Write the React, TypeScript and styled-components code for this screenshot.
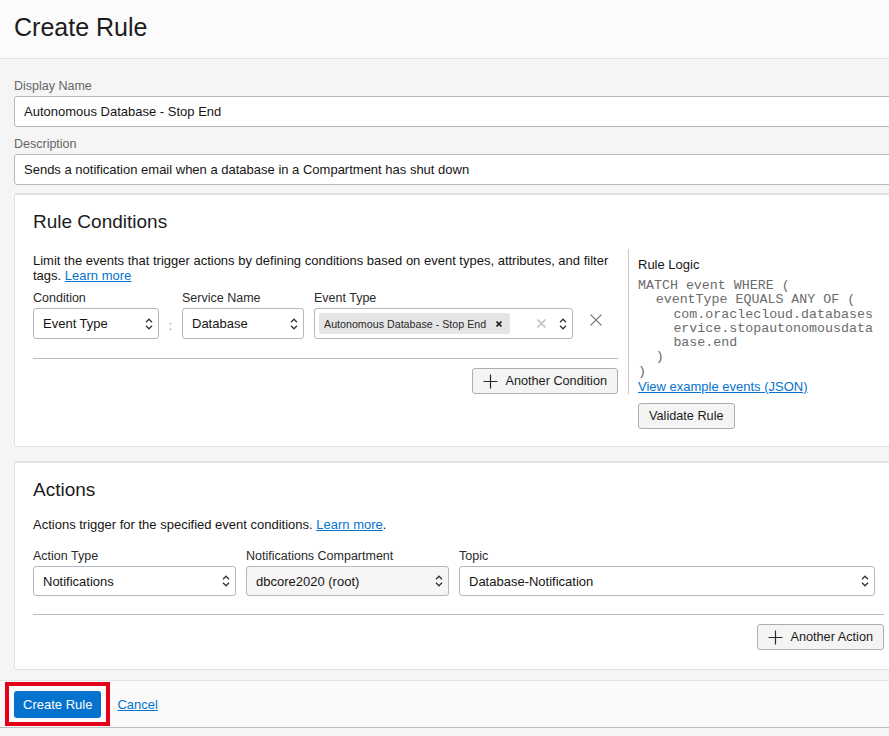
import React from "react";
import styled, { createGlobalStyle } from "styled-components";

const GlobalStyle = createGlobalStyle`
  html, body {
    margin: 0;
    padding: 0;
    overflow: hidden;
    background: #f5f5f5;
  }
  body {
    font-family: "Liberation Sans", Arial, sans-serif;
    color: #161513;
    width: 889px;
    height: 736px;
  }
  *, *::before, *::after { box-sizing: border-box; }
`;

const Page = styled.div`
  width: 931px;
`;

const Header = styled.header`
  height: 59px;
  background: #fbfbfb;
  border-bottom: 1px solid #e4e4e4;
  padding: 12px 14px 0;
`;

const Title = styled.h1`
  margin: 0;
  font-size: 25px;
  line-height: 30px;
  font-weight: 400;
  color: #1c1c1c;
`;

const Main = styled.main`
  padding: 19px 14px 0;
  width: 917px;
`;

const Field = styled.div`
  display: flex;
  flex-direction: column;
  & + & {
    margin-top: 9px;
  }
`;

const FieldLabel = styled.label<{ $strong?: boolean }>`
  font-size: 12.5px;
  line-height: 16px;
  color: ${(p) => (p.$strong ? "#2a2a2a" : "#666666")};
  margin-bottom: 2px;
  white-space: nowrap;
`;

const TextInput = styled.input`
  width: 100%;
  height: 31px;
  border: 1px solid #b3b9c2;
  border-radius: 3px;
  background: #ffffff;
  padding: 0 9px;
  font: 13px "Liberation Sans", Arial, sans-serif;
  color: #161513;
  outline: none;
`;

const Panel = styled.section<{ $top: number; $bottom: number }>`
  background: #ffffff;
  border: 1px solid #e0e0e0;
  border-top: 2px solid #e2e2e2;
  border-radius: 3px;
  padding: 16px 18px ${(p) => p.$bottom}px;
  margin-top: ${(p) => p.$top}px;
`;

const PanelTitle = styled.h2`
  margin: 0 0 16px;
  font-size: 19px;
  line-height: 22px;
  font-weight: 400;
  color: #1c1c1c;
`;

const ConditionsGrid = styled.div`
  display: grid;
  grid-template-columns: 585px 256px;
  column-gap: 10px;
  align-items: start;
`;

const Column = styled.div`
  display: flex;
  flex-direction: column;
`;

const Desc = styled.p<{ $offset?: number }>`
  margin: ${(p) => p.$offset ?? 0}px 0 0;
  font-size: 13px;
  line-height: 15px;
  color: #161513;
`;

const Link = styled.a`
  color: #0572ce;
  text-decoration: underline;
  cursor: pointer;
`;

const ConditionRow = styled.div`
  display: flex;
  align-items: flex-end;
  margin-top: 7px;
`;

const SelectField = styled.div<{ $width: number }>`
  display: flex;
  flex-direction: column;
  width: ${(p) => p.$width}px;
  flex: none;
`;

const SelectBox = styled.div<{ $height: number; $muted?: boolean }>`
  display: flex;
  align-items: center;
  height: ${(p) => p.$height}px;
  border: 1px solid #b3b9c2;
  border-radius: 3px;
  background: ${(p) => (p.$muted ? "#f6f6f6" : "#ffffff")};
  padding: 0 5px 0 9px;
  font-size: 13px;
  color: #161513;
`;

const SelectText = styled.span`
  flex: 1;
  white-space: nowrap;
  overflow: hidden;
`;

const Colon = styled.div`
  width: 23px;
  height: 31px;
  flex: none;
  display: flex;
  align-items: center;
  justify-content: center;
  color: #b8873e;
  font-size: 13px;
  padding-top: 3px;
`;

const Spacer = styled.div<{ $w: number }>`
  width: ${(p) => p.$w}px;
  flex: none;
`;

const MultiBox = styled.div`
  display: flex;
  align-items: center;
  height: 31px;
  border: 1px solid #b3b9c2;
  border-radius: 3px;
  background: #ffffff;
  padding: 0 5px 0 4px;
`;

const Tag = styled.span`
  display: inline-flex;
  align-items: center;
  gap: 10px;
  height: 21px;
  padding: 0 8px 0 5px;
  background: #e5e5e5;
  border-radius: 2px;
  font-size: 10.7px;
  color: #2a2a2a;
  white-space: nowrap;
`;

const MultiActions = styled.span`
  margin-left: auto;
  display: inline-flex;
  align-items: center;
  gap: 13px;
`;

const RemoveCell = styled.div`
  width: 45px;
  height: 31px;
  flex: none;
  display: flex;
  justify-content: center;
  padding-top: 6px;
`;

const Divider = styled.hr<{ $top: number }>`
  margin: ${(p) => p.$top}px 0 0;
  border: 0;
  height: 1px;
  background: #b8bec7;
`;

const ButtonRow = styled.div`
  display: flex;
  justify-content: flex-end;
  margin-top: 9px;
`;

const Button = styled.button<{ $indent?: number; $top?: number }>`
  display: inline-flex;
  align-items: center;
  gap: 7px;
  height: 26px;
  padding: 0 10px;
  margin: ${(p) => p.$top ?? 0}px 0 0 ${(p) => p.$indent ?? 0}px;
  align-self: flex-start;
  border: 1px solid #a9afb8;
  border-radius: 3px;
  background: #f4f4f4;
  font: 12.7px "Liberation Sans", Arial, sans-serif;
  color: #1c1c1c;
  cursor: pointer;
`;

const LogicBox = styled.div`
  border-left: 1px solid #c7c7c7;
  padding: 8px 0 0 9px;
`;

const LogicTitle = styled.div`
  font-size: 13px;
  line-height: 16px;
  color: #161513;
`;

const Code = styled.div`
  margin-top: 6px;
  font-family: "Liberation Mono", "Courier New", monospace;
  font-size: 13.3px;
  line-height: 14.3px;
  color: #6b6b6b;
`;

const CodeLine = styled.div<{ $indent: number }>`
  padding-left: ${(p) => p.$indent * 17.7}px;
  white-space: pre;
`;

const LogicLink = styled(Link)`
  display: block;
  font-size: 13px;
  line-height: 15px;
`;

const ActionsGrid = styled.div`
  display: grid;
  grid-template-columns: 203px 203px 416px;
  column-gap: 10px;
  margin-top: 16px;
`;

const Footer = styled.footer`
  margin-top: 10px;
  height: 48px;
  width: 889px;
  background: #fafafa;
  border-top: 1px solid #e4e4e4;
  border-bottom: 1px solid #b9bfc8;
  display: flex;
  align-items: center;
  padding-left: 5px;
`;

const Highlight = styled.div`
  display: inline-flex;
  border: 4px solid #e5001a;
  padding: 5px 5px 4px;
`;

const PrimaryButton = styled.button`
  height: 27px;
  padding: 0 9px;
  border: 0;
  border-radius: 3px;
  background: #0572ce;
  color: #ffffff;
  font: 13px "Liberation Sans", Arial, sans-serif;
  cursor: pointer;
`;

const CancelLink = styled(Link)`
  margin-left: 7px;
  font-size: 13px;
  line-height: 15px;
`;

const Chevron = () => (
  <svg width="8" height="14" viewBox="0 0 8 14" fill="none" stroke="#333" strokeWidth="1.3">
    <path d="M1 5.2 L4 2.2 L7 5.2" />
    <path d="M1 8.8 L4 11.8 L7 8.8" />
  </svg>
);

const Plus = () => (
  <svg width="15" height="15" viewBox="0 0 15 15" stroke="#2a2a2a" strokeWidth="1.2">
    <path d="M7.5 0.5 V14.5 M0.5 7.5 H14.5" />
  </svg>
);

const RemoveX = () => (
  <svg width="12" height="12" viewBox="0 0 12 12" stroke="#7a7a7a" strokeWidth="1.1">
    <path d="M0.5 0.5 L11.5 11.5 M11.5 0.5 L0.5 11.5" />
  </svg>
);

const TagX = () => (
  <svg width="6" height="6" viewBox="0 0 6 6" stroke="#222" strokeWidth="1.6">
    <path d="M0.5 0.5 L5.5 5.5 M5.5 0.5 L0.5 5.5" />
  </svg>
);

const ClearX = () => (
  <svg width="9" height="9" viewBox="0 0 9 9" stroke="#c4c4c4" strokeWidth="1.6">
    <path d="M0.5 0.5 L8.5 8.5 M8.5 0.5 L0.5 8.5" />
  </svg>
);

type SelectProps = {
  label: string;
  value: string;
  width: number;
  height: number;
  muted?: boolean;
};

const Select = ({ label, value, width, height, muted }: SelectProps) => (
  <SelectField $width={width}>
    <FieldLabel $strong>{label}</FieldLabel>
    <SelectBox $height={height} $muted={muted}>
      <SelectText>{value}</SelectText>
      <Chevron />
    </SelectBox>
  </SelectField>
);

const codeLines: Array<[number, string]> = [
  [0, "MATCH event WHERE ("],
  [1, "eventType EQUALS ANY OF ("],
  [2, "com.oraclecloud.databases"],
  [2, "ervice.stopautonomousdata"],
  [2, "base.end"],
  [1, ")"],
  [0, ")"],
];

export default function App() {
  return (
    <Page>
      <GlobalStyle />
      <Header>
        <Title>Create Rule</Title>
      </Header>
      <Main>
        <Field>
          <FieldLabel>Display Name</FieldLabel>
          <TextInput readOnly defaultValue="Autonomous Database - Stop End" />
        </Field>
        <Field>
          <FieldLabel>Description</FieldLabel>
          <TextInput
            readOnly
            defaultValue="Sends a notification email when a database in a Compartment has shut down"
          />
        </Field>

        <Panel $top={8} $bottom={17}>
          <PanelTitle>Rule Conditions</PanelTitle>
          <ConditionsGrid>
            <Column>
              <Desc $offset={4}>
                Limit the events that trigger actions by defining conditions based on event types, attributes, and filter
                tags. <Link>Learn more</Link>
              </Desc>
              <ConditionRow>
                <Select label="Condition" value="Event Type" width={126} height={31} />
                <Colon>:</Colon>
                <Select label="Service Name" value="Database" width={122} height={31} />
                <Spacer $w={10} />
                <SelectField $width={259}>
                  <FieldLabel $strong>Event Type</FieldLabel>
                  <MultiBox>
                    <Tag>
                      Autonomous Database - Stop End
                      <TagX />
                    </Tag>
                    <MultiActions>
                      <ClearX />
                      <Chevron />
                    </MultiActions>
                  </MultiBox>
                </SelectField>
                <RemoveCell>
                  <RemoveX />
                </RemoveCell>
              </ConditionRow>
              <Divider $top={19} />
              <ButtonRow>
                <Button>
                  <Plus />
                  Another Condition
                </Button>
              </ButtonRow>
            </Column>
            <Column>
              <LogicBox>
                <LogicTitle>Rule Logic</LogicTitle>
                <Code>
                  {codeLines.map(([indent, text], i) => (
                    <CodeLine key={i} $indent={indent}>
                      {text}
                    </CodeLine>
                  ))}
                </Code>
                <LogicLink>View example events (JSON)</LogicLink>
              </LogicBox>
              <Button $indent={10} $top={9}>
                Validate Rule
              </Button>
            </Column>
          </ConditionsGrid>
        </Panel>

        <Panel $top={14} $bottom={19}>
          <PanelTitle>Actions</PanelTitle>
          <Desc>
            Actions trigger for the specified event conditions. <Link>Learn more</Link>.
          </Desc>
          <ActionsGrid>
            <Select label="Action Type" value="Notifications" width={203} height={30} />
            <Select label="Notifications Compartment" value="dbcore2020 (root)" width={203} height={30} muted />
            <Select label="Topic" value="Database-Notification" width={416} height={30} />
          </ActionsGrid>
          <Divider $top={18} />
          <ButtonRow>
            <Button>
              <Plus />
              Another Action
            </Button>
          </ButtonRow>
        </Panel>
      </Main>
      <Footer>
        <Highlight>
          <PrimaryButton>Create Rule</PrimaryButton>
        </Highlight>
        <CancelLink>Cancel</CancelLink>
      </Footer>
    </Page>
  );
}
